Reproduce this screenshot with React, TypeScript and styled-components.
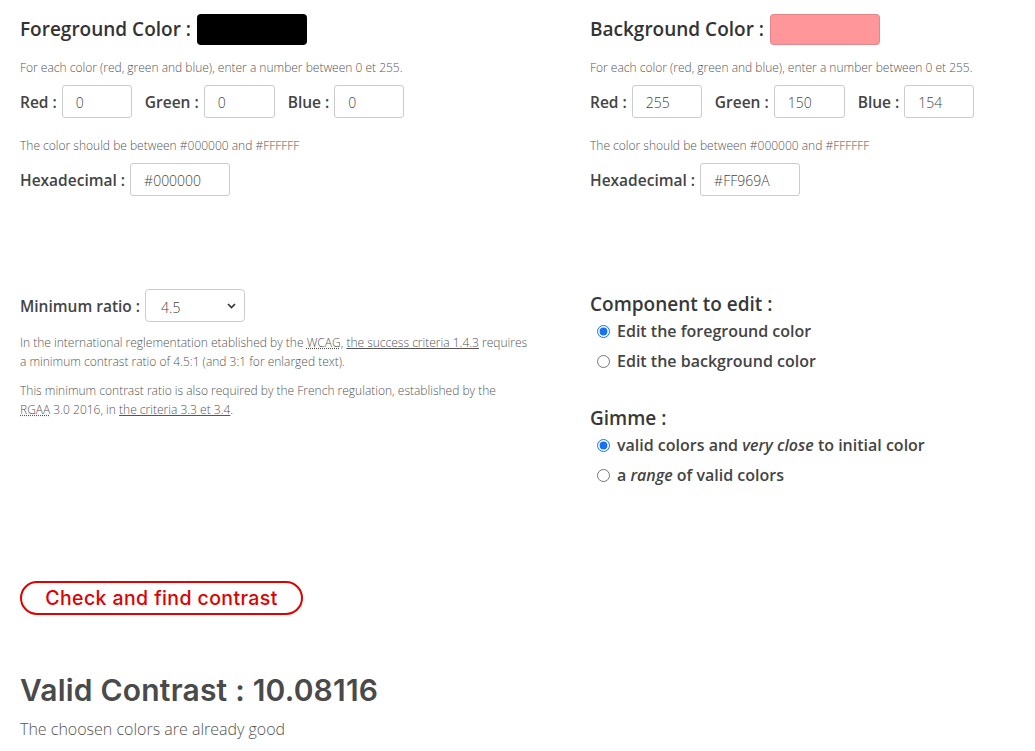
import React from "react";
import styled, { createGlobalStyle } from "styled-components";

const Global = createGlobalStyle`
  html, body { margin: 0; padding: 0; background: #fff; }
  body { font-family: "Open Sans", "Liberation Sans", sans-serif; color: #333; }
  * { box-sizing: border-box; }
`;

const Page = styled.main`
  padding: 14px 20px 0 20px;
  display: flex;
  flex-direction: column;
`;

const Columns = styled.div<{ $mt?: number }>`
  display: grid;
  grid-template-columns: 570px 1fr;
  margin-top: ${(p) => p.$mt ?? 0}px;
`;

const Column = styled.section<{ $pt?: number }>`
  display: flex;
  flex-direction: column;
  padding-top: ${(p) => p.$pt ?? 0}px;
`;

const TitleRow = styled.div`
  display: flex;
  align-items: center;
  gap: 6px;
`;

const Title = styled.h2`
  margin: 0;
  font-size: 19px;
  font-weight: 600;
  color: #333;
  line-height: 31px;
`;

const Swatch = styled.div<{ $color: string }>`
  width: 110px;
  height: 31px;
  border-radius: 4px;
  background: ${(p) => p.$color};
  border: 1px solid rgba(0, 0, 0, 0.1);
`;

const Hint = styled.p<{ $mt?: number }>`
  margin: ${(p) => p.$mt ?? 0}px 0 0 0;
  font-size: 12px;
  font-weight: 300;
  color: #555;
  line-height: 19px;
`;

const FieldRow = styled.div<{ $mt?: number }>`
  display: flex;
  align-items: center;
  gap: 13px;
  margin-top: ${(p) => p.$mt ?? 0}px;
`;

const Field = styled.label`
  display: flex;
  align-items: center;
  gap: 5px;
`;

const Label = styled.span`
  font-size: 15.5px;
  font-weight: 600;
  color: #444;
`;

const TextInput = styled.input<{ $w: number }>`
  width: ${(p) => p.$w}px;
  height: 33px;
  border: 1px solid #ccc;
  border-radius: 3px;
  padding: 2px 0 0 13px;
  font-family: "Open Sans", "Liberation Sans", sans-serif;
  font-size: 14px;
  font-weight: 300;
  color: #444;
  background: #fff;
  outline: none;
`;

const SelectWrap = styled.div`
  position: relative;
  width: 100px;
  height: 33px;
`;

const Select = styled.select`
  appearance: none;
  width: 100%;
  height: 100%;
  border: 1px solid #ccc;
  border-radius: 4px;
  padding: 4px 0 0 15px;
  font-family: "Open Sans", "Liberation Sans", sans-serif;
  font-size: 14px;
  font-weight: 300;
  color: #444;
  background: #fff;
`;

const Chevron = styled.svg`
  position: absolute;
  right: 9px;
  top: 14px;
  pointer-events: none;
`;

const Para = styled.p<{ $mt?: number; $maxW: number }>`
  margin: ${(p) => p.$mt ?? 0}px 0 0 0;
  font-size: 12px;
  font-weight: 300;
  color: #555;
  line-height: 19px;
  max-width: ${(p) => p.$maxW}px;
`;

const Link = styled.a`
  color: #555;
  text-decoration: underline;
`;

const Abbr = styled.abbr`
  text-decoration: underline dotted;
`;

const GroupTitle = styled.h3<{ $mt?: number }>`
  margin: ${(p) => p.$mt ?? 0}px 0 0 0;
  font-size: 19px;
  font-weight: 600;
  color: #383838;
  line-height: 28px;
`;

const RadioList = styled.div`
  display: flex;
  flex-direction: column;
  gap: 8px;
  margin-top: 2px;
  padding-left: 7px;
`;

const RadioLabel = styled.label`
  display: flex;
  align-items: center;
  gap: 7px;
  font-size: 16px;
  font-weight: 600;
  color: #444;
  line-height: 22px;
`;

const Radio = styled.input`
  margin: 0;
  width: 13px;
  height: 13px;
  accent-color: #1a6ff5;
`;

const Em = styled.em`
  font-style: italic;
`;

const CheckButton = styled.button`
  align-self: flex-start;
  margin-top: 95px;
  width: 283px;
  height: 34px;
  border: 2px solid #e00000;
  border-radius: 17px;
  background: #fff;
  color: #e00000;
  font-family: Inter, "Noto Sans", sans-serif;
  font-size: 19.5px;
  font-weight: 500;
  padding: 0;
  letter-spacing: 0.4px;
`;

const Result = styled.h2`
  margin: 55px 0 0 0;
  font-family: Inter, "Noto Sans", sans-serif;
  font-size: 30px;
  font-weight: 600;
  color: #4a4a4a;
  line-height: 40px;
  letter-spacing: 0.2px;
`;

const ResultText = styled.p`
  margin: 8px 0 0 0;
  font-size: 16px;
  font-weight: 300;
  color: #555;
`;

type ColorProps = { title: string; swatch: string; r: string; g: string; b: string; hex: string };

const ColorBlock: React.FC<ColorProps> = ({ title, swatch, r, g, b, hex }) => (
  <Column>
    <TitleRow>
      <Title>{title}</Title>
      <Swatch $color={swatch} />
    </TitleRow>
    <Hint $mt={13}>For each color (red, green and blue), enter a number between 0 et 255.</Hint>
    <FieldRow $mt={8}>
      <Field>
        <Label>Red :</Label>
        <TextInput $w={70} defaultValue={r} />
      </Field>
      <Field>
        <Label>Green :</Label>
        <TextInput $w={71} defaultValue={g} />
      </Field>
      <Field>
        <Label>Blue :</Label>
        <TextInput $w={70} defaultValue={b} />
      </Field>
    </FieldRow>
    <Hint $mt={18}>The color should be between #000000 and #FFFFFF</Hint>
    <FieldRow $mt={8}>
      <Field>
        <Label>Hexadecimal :</Label>
        <TextInput $w={100} defaultValue={hex} />
      </Field>
    </FieldRow>
  </Column>
);

export default function App() {
  return (
    <>
      <Global />
      <Page>
        <Columns>
          <ColorBlock title="Foreground Color :" swatch="#000000" r="0" g="0" b="0" hex="#000000" />
          <ColorBlock title="Background Color :" swatch="#FF969A" r="255" g="150" b="154" hex="#FF969A" />
        </Columns>
        <Columns $mt={93}>
          <Column>
            <FieldRow>
              <Field>
                <Label>Minimum ratio :</Label>
                <SelectWrap>
                  <Select defaultValue="4.5">
                    <option>3</option>
                    <option>4.5</option>
                    <option>7</option>
                  </Select>
                  <Chevron width="9" height="6" viewBox="0 0 9 6">
                    <path d="M1 1l3.5 3.5L8 1" fill="none" stroke="#333" strokeWidth="1.6" />
                  </Chevron>
                </SelectWrap>
              </Field>
            </FieldRow>
            <Para $mt={11} $maxW={515}>
              In the international reglementation etablished by the <Abbr>WCAG</Abbr>,{" "}
              <Link>the success criteria 1.4.3</Link> requires a minimum contrast ratio of 4.5:1 (and 3:1 for
              enlarged text).
            </Para>
            <Para $mt={10} $maxW={500}>
              This minimum contrast ratio is also required by the French regulation, established by the{" "}
              <Abbr>RGAA</Abbr> 3.0 2016, in <Link>the criteria 3.3 et 3.4</Link>.
            </Para>
          </Column>
          <Column $pt={1}>
            <GroupTitle $mt={0}>Component to edit :</GroupTitle>
            <RadioList>
              <RadioLabel>
                <Radio type="radio" name="comp" defaultChecked />
                Edit the foreground color
              </RadioLabel>
              <RadioLabel>
                <Radio type="radio" name="comp" />
                Edit the background color
              </RadioLabel>
            </RadioList>
            <GroupTitle $mt={32}>Gimme :</GroupTitle>
            <RadioList>
              <RadioLabel>
                <Radio type="radio" name="gimme" defaultChecked />
                <span>
                  valid colors and <Em>very close</Em> to initial color
                </span>
              </RadioLabel>
              <RadioLabel>
                <Radio type="radio" name="gimme" />
                <span>
                  a <Em>range</Em> of valid colors
                </span>
              </RadioLabel>
            </RadioList>
          </Column>
        </Columns>
        <CheckButton>Check and find contrast</CheckButton>
        <Result>Valid Contrast : 10.08116</Result>
        <ResultText>The choosen colors are already good</ResultText>
      </Page>
    </>
  );
}
